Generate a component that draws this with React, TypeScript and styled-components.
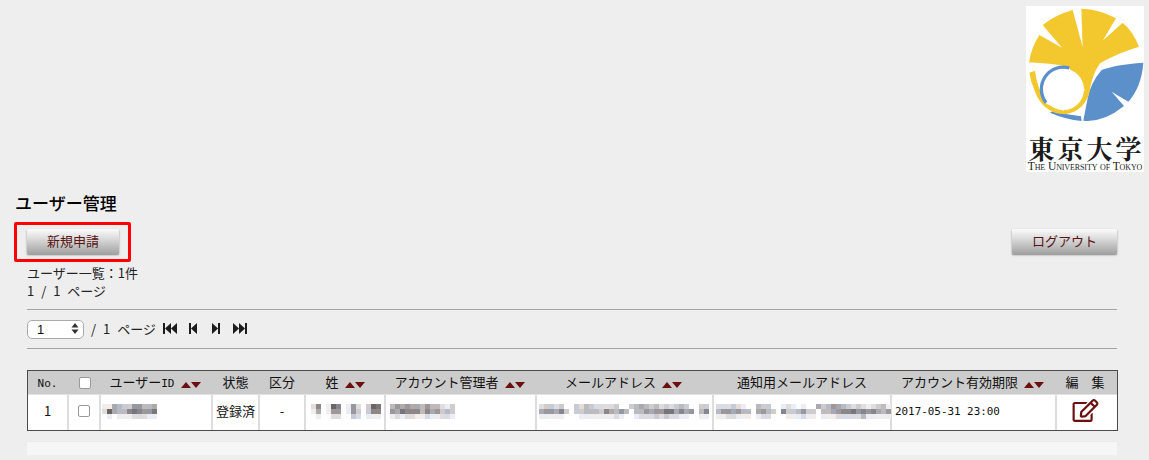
import React from "react";
import styled, { createGlobalStyle } from "styled-components";
import { FaRegEdit } from "react-icons/fa";

const CJK = `"Noto Sans CJK JP", "Liberation Sans", sans-serif`;
const MONO = `"DejaVu Sans Mono", monospace`;
const MAROON = "#6b0f0f";

const Global = createGlobalStyle`
  html, body { margin: 0; padding: 0; background: #eeeeee; }
  body { font-family: ${CJK}; color: #111; overflow: hidden; }
`;

const Page = styled.div`
  width: 1149px;
  height: 460px;
  box-sizing: border-box;
  padding: 6px 32px 0 14px;
  display: flex;
  flex-direction: column;
`;

const Masthead = styled.header`
  display: flex;
  justify-content: flex-end;
  margin-right: -27px;
`;

const LogoBox = styled.div`
  width: 118px;
  height: 166px;
  background: #fff;
  display: flex;
  flex-direction: column;
  align-items: center;
  overflow: hidden;
`;

const LogoArt = styled.svg`
  display: block;
  flex: none;
  filter: blur(0.3px);
`;

const LogoKanji = styled.div`
  font-family: "Noto Serif CJK JP", "Noto Sans CJK JP", serif;
  font-weight: 700;
  font-size: 26px;
  line-height: 26px;
  letter-spacing: 3px;
  margin-top: 6px;
  margin-right: -3px;
  color: #1a1a1a;
  white-space: nowrap;
`;

const LogoLatin = styled.div`
  font-family: "Liberation Serif", serif;
  font-size: 11.6px;
  line-height: 10px;
  margin-top: 1px;
  letter-spacing: -0.12px;
  color: #222;
  white-space: nowrap;
  font-variant: small-caps;
`;

const Title = styled.h1`
  margin: 20px 0 0 1px;
  font-size: 17px;
  line-height: 22px;
  font-weight: 500;
  color: #000;
`;

const Toolbar = styled.div`
  display: flex;
  justify-content: space-between;
  align-items: flex-start;
  margin-top: 8px;
`;

const Highlight = styled.div`
  border: 3px solid #ff0000;
  border-radius: 2px;
  padding: 4px 9px 5px 10px;
  display: flex;
`;

const ActionButton = styled.button<{ $width: number }>`
  width: ${(p) => p.$width}px;
  height: 25px;
  padding: 0 0 3px;
  border: 0;
  border-radius: 1px;
  background: linear-gradient(#fbfbfb 0%, #dedede 35%, #a2a2a2 100%);
  box-shadow: 0 1px 2px rgba(0, 0, 0, 0.45);
  font-family: ${CJK};
  font-size: 13px;
  color: #5a1414;
`;

const LogoutButton = styled(ActionButton)`
  margin-top: 7px;
`;

const Content = styled.section`
  margin-left: 13px;
`;

const Info = styled.div`
  font-size: 13px;
  line-height: 18px;
  margin-top: 2px;
  white-space: pre;
  word-spacing: 4px;
  color: #222;
`;

const Rule = styled.hr`
  margin: 0;
  border: 0;
  border-top: 1px solid #a5a5a5;
`;

const TopRule = styled(Rule)`
  margin-top: 9px;
`;

const Pager = styled.div`
  display: flex;
  align-items: center;
  height: 36px;
  padding-bottom: 2px;
  font-size: 13px;
  white-space: pre;
  word-spacing: 4px;
  color: #222;
`;

const SelectWrap = styled.div`
  position: relative;
  width: 57px;
  height: 19px;
  margin-right: 7px;
`;

const PageSelect = styled.select`
  appearance: none;
  width: 100%;
  height: 100%;
  box-sizing: border-box;
  border: 1px solid #ababab;
  border-radius: 5px;
  background: #fff;
  padding: 0 0 0 9px;
  font-family: "Liberation Sans", sans-serif;
  font-size: 13px;
  color: #111;
`;

const SelectArrows = styled.svg`
  position: absolute;
  right: 5px;
  top: 4px;
  pointer-events: none;
`;

const NavIcon = styled.svg<{ $gap: number }>`
  margin-left: ${(p) => p.$gap}px;
  flex: none;
`;

const UserTable = styled.table`
  margin-top: 21px;
  width: 1090px;
  height: 61px;
  box-sizing: border-box;
  table-layout: fixed;
  border-collapse: separate;
  border-spacing: 0;
  border: 1px solid #4a4a4a;
  background: #fff;
`;

const Th = styled.th<{ $sorted?: boolean }>`
  height: 24px;
  padding: 0 ${(p) => (p.$sorted ? 4 : 2)}px 3px 0;
  box-sizing: border-box;
  background: #cccccc;
  border-bottom: 1px solid #e2e2e2;
  font-size: 13px;
  font-weight: 400;
  color: #111;
  text-align: center;
  white-space: nowrap;
`;

const CheckTh = styled(Th)`
  padding: 0;
`;

const Latin = styled.span`
  font-family: ${MONO};
  font-size: 11px;
`;

const Td = styled.td`
  height: 34px;
  padding: 0 0 5px;
  box-sizing: border-box;
  border-right: 2px solid #dddddd;
  font-size: 13px;
  text-align: center;
  color: #111;
  white-space: nowrap;
  &:last-child { border-right: 0; }
`;

const PlainCell = styled(Td)`
  padding-bottom: 3px;
`;

const DateCell = styled(Td)`
  text-align: left;
  padding: 0 0 3px 3px;
  font-family: ${MONO};
  font-size: 10.9px;
`;

const MaskCell = styled(Td)<{ $pad?: number }>`
  text-align: left;
  padding: 0 0 2px ${(p) => p.$pad ?? 0}px;
`;

const Check = styled.input.attrs({ type: "checkbox" })`
  appearance: none;
  display: block;
  margin: 0 auto;
  width: 12px;
  height: 12px;
  box-sizing: border-box;
  border: 1px solid #9a9a9a;
  border-radius: 2px;
  background: #fff;
`;

const Sort = styled.svg`
  margin-left: 6px;
  vertical-align: -1px;
`;

const EditIcon = styled(FaRegEdit)`
  color: ${MAROON};
  display: block;
  margin: 0 auto 2px;
  font-size: 23px;
  width: 27px;
  transform: translateX(-2px);
`;

const FooterBar = styled.div`
  margin-top: 10px;
  height: 13px;
  background: #f6f6f6;
  border-top: 1px solid #eaeaea;
`;

const Mask = styled.svg`
  display: block;
`;

function SortArrows() {
  return (
    <Sort width="20" height="7" viewBox="0 0 20 7">
      <path d="M0 7 L5 1 L10 7Z M10 1 L20 1 L15 7Z" fill={MAROON} />
    </Sort>
  );
}

function Mosaic({ rows, seed }: { rows: string[]; seed: number }) {
  let s = seed;
  const rnd = () => {
    s = (s * 9301 + 49297) % 233280;
    return s / 233280;
  };
  const cols = Math.max(...rows.map((r) => r.length));
  const rects: React.ReactNode[] = [];
  rows.forEach((row, r) => {
    row.split("").forEach((ch, c) => {
      const t = rnd() * 14 - 7;
      if (ch === ".") return;
      const g = parseInt(ch, 16) * 17;
      const fill = `rgb(${Math.round(g + t)},${g - 1},${Math.round(g - t + 4)})`;
      rects.push(<rect key={`${r}-${c}`} x={c * 5} y={r * 5} width="5" height="5" fill={fill} />);
    });
  });
  return (
    <Mask width={cols * 5} height="15" viewBox={`0 0 ${cols * 5} 15`}>
      {rects}
    </Mask>
  );
}

function Logo() {
  return (
    <LogoBox>
      <LogoArt width="118" height="123" viewBox="78 18 354 369">
        <path
          d="M430 188 Q345 194 305 210 Q270 250 262 300 Q255 335 250 362 Q310 368 372 318 L335 275 L385 305 Q425 260 430 188Z"
          fill="#5b90cb"
        />
        <path d="M160 332 Q200 345 243 349 L245 363 Q195 358 150 338Z" fill="#5b90cb" />
        <path
          d="M87 187 Q95 140 118 105 L186 143 L128 75 Q165 45 218 30 L248 142 L244 26 Q300 28 348 55 L308 122 L368 68 Q400 95 417 140 Q350 160 300 190 Q275 225 268 280 Q250 335 195 343 Q130 340 105 275 Q92 245 88 218 L105 212 Q110 262 140 312 L190 332 L255 270 L205 200 Q150 190 87 187Z"
          fill="#f2c82e"
        />
        <circle cx="190" cy="268" r="62" fill="#fff" />
        <path d="M208 204 A66 66 0 0 0 138 308" fill="none" stroke="#5b90cb" strokeWidth="10" />
      </LogoArt>
      <LogoKanji>東京大学</LogoKanji>
      <LogoLatin>The University of Tokyo</LogoLatin>
    </LogoBox>
  );
}

const NavPaths = {
  first: "M0 0H2V11H0Z M8 0V11L2 5.5Z M14 0V11L8 5.5Z",
  prev: "M0 0H2V11H0Z M8 0V11L2 5.5Z",
  next: "M0 0V11L6 5.5Z M6 0H8V11H6Z",
  last: "M0 0V11L6 5.5Z M6 0V11L12 5.5Z M12 0H14V11H12Z",
};

const widths = [41, 32, 112, 47, 46, 80, 151, 177, 178, 165, 60];

export default function App() {
  return (
    <Page>
      <Global />
      <Masthead>
        <Logo />
      </Masthead>
      <Title>ユーザー管理</Title>
      <Toolbar>
        <Highlight>
          <ActionButton $width={92}>新規申請</ActionButton>
        </Highlight>
        <LogoutButton $width={105}>ログアウト</LogoutButton>
      </Toolbar>
      <Content>
        <Info>ユーザー一覧：1件{"\n"}1 / 1 ページ</Info>
        <TopRule />
        <Pager>
          <SelectWrap>
            <PageSelect defaultValue="1">
              <option value="1">1</option>
            </PageSelect>
            <SelectArrows width="8" height="11" viewBox="0 0 8 11">
              <path d="M4 0 L7.5 4.5 L0.5 4.5Z M4 11 L7.5 6.5 L0.5 6.5Z" fill="#333" />
            </SelectArrows>
          </SelectWrap>
          / 1 ページ
          <NavIcon $gap={7} width="14" height="11" viewBox="0 0 14 11" fill="#1c1c1c">
            <path d={NavPaths.first} />
          </NavIcon>
          <NavIcon $gap={12} width="8" height="11" viewBox="0 0 8 11" fill="#1c1c1c">
            <path d={NavPaths.prev} />
          </NavIcon>
          <NavIcon $gap={15} width="8" height="11" viewBox="0 0 8 11" fill="#1c1c1c">
            <path d={NavPaths.next} />
          </NavIcon>
          <NavIcon $gap={13} width="14" height="11" viewBox="0 0 14 11" fill="#1c1c1c">
            <path d={NavPaths.last} />
          </NavIcon>
        </Pager>
        <Rule />
        <UserTable>
          <colgroup>
            {widths.map((w, i) => (
              <col key={i} width={w} />
            ))}
          </colgroup>
          <thead>
            <tr>
              <Th>
                <Latin>No.</Latin>
              </Th>
              <CheckTh>
                <Check />
              </CheckTh>
              <Th $sorted>
                ユーザー<Latin>ID</Latin>
                <SortArrows />
              </Th>
              <Th>状態</Th>
              <Th>区分</Th>
              <Th>
                姓
                <SortArrows />
              </Th>
              <Th $sorted>
                アカウント管理者
                <SortArrows />
              </Th>
              <Th $sorted>
                メールアドレス
                <SortArrows />
              </Th>
              <Th>通知用メールアドレス</Th>
              <Th $sorted>
                アカウント有効期限
                <SortArrows />
              </Th>
              <Th $sorted>編　集</Th>
            </tr>
          </thead>
          <tbody>
            <tr>
              <Td>1</Td>
              <PlainCell>
                <Check />
              </PlainCell>
              <MaskCell $pad={1}>
                <Mosaic seed={11} rows={["eeabcc99bba", "d6abb878997", "fefeeedddee"]} />
              </MaskCell>
              <Td>登録済</Td>
              <Td>-</Td>
              <MaskCell>
                <Mosaic seed={23} rows={[".d8.e68fe9d.c67", ".ea.e99fe9c.c88", ".fe.fddffcd.eee"]} />
              </MaskCell>
              <MaskCell $pad={4}>
                <Mosaic seed={37} rows={["b9a9aab9bbdec", "9a7888b8a9cbc", "ededdeedeedde"]} />
              </MaskCell>
              <MaskCell $pad={2}>
                <Mosaic
                  seed={41}
                  rows={[
                    "dccdcf.cdbcddddcf.cbabcbdcdcbcf.cc",
                    "a99a8c.ccbbbc8ab9b.bb9a9977a8a9fb8",
                    "eeeeef.feeeeeeedef.edddcdcddeef.ee",
                  ]}
                />
              </MaskCell>
              <MaskCell $pad={2}>
                <Mosaic
                  seed={53}
                  rows={[
                    "dddcdef.bccf.edefef.acb9abcdcdedcbe",
                    "b99a9bb.a9bc.8ccb9cc.bba98879898ab9",
                    "eeddeee.eddf.feeedee.eeedddddbeeeee",
                  ]}
                />
              </MaskCell>
              <DateCell>2017-05-31 23:00</DateCell>
              <PlainCell>
                <EditIcon />
              </PlainCell>
            </tr>
          </tbody>
        </UserTable>
        <FooterBar />
      </Content>
    </Page>
  );
}
